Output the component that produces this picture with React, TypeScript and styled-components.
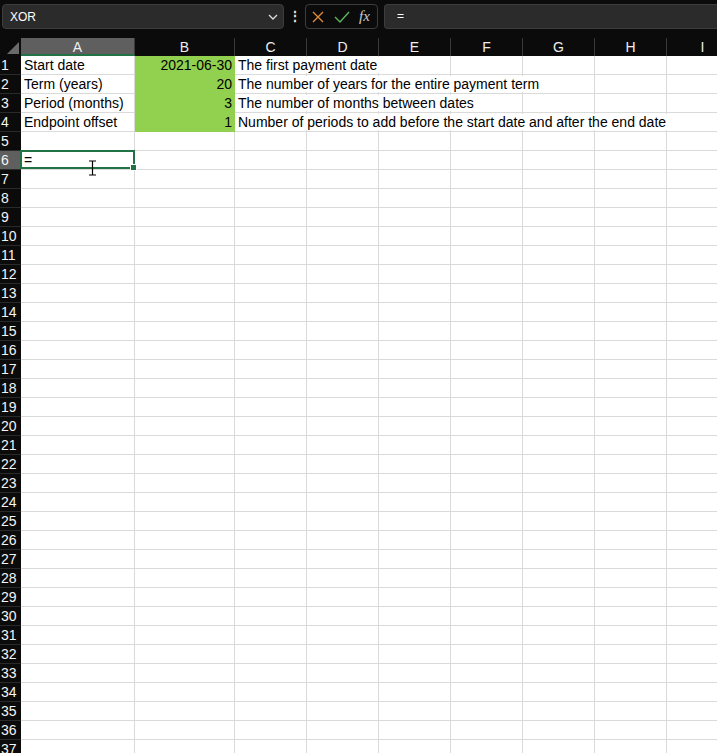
import React from "react";
import styled, { createGlobalStyle } from "styled-components";

const Global = createGlobalStyle`
  html, body { margin: 0; padding: 0; background: #fff; overflow: hidden; }
  body { font-family: Arial, "Liberation Sans", sans-serif; }
`;

const cols = [
  { n: "A", w: 114 },
  { n: "B", w: 100 },
  { n: "C", w: 72 },
  { n: "D", w: 72 },
  { n: "E", w: 72 },
  { n: "F", w: 72 },
  { n: "G", w: 72 },
  { n: "H", w: 72 },
  { n: "I", w: 72 },
];
const template = `21px ${cols.map((c) => c.w + "px").join(" ")}`;

const Page = styled.div`
  width: 717px;
  height: 753px;
  overflow: hidden;
  background: #fff;
`;
const Bar = styled.div`
  height: 38px;
  background: #0b0b0b;
  display: flex;
  align-items: flex-start;
  padding-top: 4px;
  box-sizing: border-box;
`;
const NameBox = styled.div`
  margin-left: 2px;
  width: 282px;
  height: 25px;
  box-sizing: border-box;
  background: #2b2b2b;
  border: 1px solid #3d3d3d;
  border-radius: 4px;
  display: flex;
  align-items: center;
  justify-content: space-between;
  padding: 0 4px 0 7px;
  color: #fff;
  font-size: 12px;
`;
const Dots = styled.div`
  width: 21px;
  text-align: center;
  color: #ddd;
  font-size: 14px;
  font-weight: bold;
  line-height: 25px;
`;
const FxBox = styled.div`
  width: 73px;
  height: 25px;
  box-sizing: border-box;
  border: 1px solid #3d3d3d;
  border-radius: 4px;
  display: flex;
  align-items: center;
  gap: 9px;
  padding-left: 5px;
`;
const Fx = styled.span`
  color: #ccc;
  font-family: "Liberation Serif", serif;
  font-style: italic;
  font-size: 15px;
`;
const Formula = styled.div`
  margin-left: 6px;
  flex: 1;
  height: 25px;
  box-sizing: border-box;
  background: #2b2b2b;
  border: 1px solid #3d3d3d;
  border-right: none;
  border-radius: 4px 0 0 4px;
  color: #fff;
  font-size: 12px;
  padding-left: 12px;
  line-height: 23px;
`;
const Grid = styled.div`
  display: grid;
  grid-template-columns: ${template};
  grid-auto-rows: 19px;
  grid-template-rows: 18px;
`;
const Corner = styled.div`
  background: #0b0b0b;
  position: relative;
  &::after {
    content: "";
    position: absolute;
    right: 2px;
    bottom: 2px;
    border-left: 12px solid transparent;
    border-bottom: 12px solid #6a6a6a;
  }
`;
const ColHead = styled.div<{ $sel?: boolean }>`
  background: ${(p) => (p.$sel ? "#5f5f5f" : "#0b0b0b")};
  color: #eee;
  font-size: 14px;
  text-align: center;
  line-height: 18px;
  box-sizing: border-box;
  border-right: 1px solid #3a3a3a;
  border-bottom: ${(p) => (p.$sel ? "2px solid #217346" : "none")};
`;
const RowHead = styled.div<{ $sel?: boolean }>`
  background: ${(p) => (p.$sel ? "#5f5f5f" : "#0b0b0b")};
  color: #f4f4f4;
  font-size: 14px;
  line-height: 19px;
  padding-left: 1px;
  box-sizing: border-box;
  border-bottom: 1px solid #2a2a2a;
  white-space: nowrap;
  overflow: hidden;
`;
const Cell = styled.div<{ $green?: boolean; $right?: boolean; $spill?: boolean }>`
  position: relative;
  box-sizing: border-box;
  background: ${(p) => (p.$green ? "#92d050" : "#fff")};
  border-right: 1px solid ${(p) => (p.$green ? "#92d050" : "#dadada")};
  border-bottom: 1px solid ${(p) => (p.$green ? "#92d050" : "#dadada")};
  font-size: 14px;
  color: #000;
  line-height: 19px;
  padding: 0 2px 0 3px;
  text-align: ${(p) => (p.$right ? "right" : "left")};
  white-space: nowrap;
  overflow: visible;
  z-index: ${(p) => (p.$spill ? 2 : 0)};
`;
const Spill = styled.span`
  background: #fff;
  padding-right: 2px;
`;
const Selected = styled.div`
  position: absolute;
  left: -1px;
  top: -1px;
  right: -1px;
  bottom: 0;
  border: 2px solid #217346;
  z-index: 3;
  &::after {
    content: "";
    position: absolute;
    right: -4px;
    bottom: -4px;
    width: 5px;
    height: 5px;
    background: #217346;
    border: 1px solid #fff;
  }
`;
const Cursor = styled.svg`
  position: absolute;
  left: 67px;
  top: 9px;
  z-index: 4;
`;

const data: Record<number, [string, string, string]> = {
  1: ["Start date", "2021-06-30", "The first payment date"],
  2: ["Term (years)", "20", "The number of years for the entire payment term"],
  3: ["Period (months)", "3", "The number of months between dates"],
  4: ["Endpoint offset", "1", "Number of periods to add before the start date and after the end date"],
};

export default function App() {
  const rows = Array.from({ length: 37 }, (_, i) => i + 1);
  return (
    <Page>
      <Global />
      <Bar>
        <NameBox>
          <span>XOR</span>
          <svg width="12" height="12" viewBox="0 0 12 12">
            <path d="M2 4l4 4 4-4" stroke="#ddd" strokeWidth="1.3" fill="none" />
          </svg>
        </NameBox>
        <Dots>⋮</Dots>
        <FxBox>
          <svg width="14" height="14" viewBox="0 0 14 14">
            <path d="M2 2l10 10M12 2L2 12" stroke="#e08a3a" strokeWidth="1.4" />
          </svg>
          <svg width="16" height="14" viewBox="0 0 16 14">
            <path d="M1 7l5 5L15 2" stroke="#5cb85c" strokeWidth="1.4" fill="none" />
          </svg>
          <Fx>fx</Fx>
        </FxBox>
        <Formula>=</Formula>
      </Bar>
      <Grid>
        <Corner />
        {cols.map((c) => (
          <ColHead key={c.n} $sel={c.n === "A"}>
            {c.n}
          </ColHead>
        ))}
        {rows.map((r) => {
          const d = data[r];
          return (
            <React.Fragment key={r}>
              <RowHead $sel={r === 6}>{r}</RowHead>
              {cols.map((c, ci) => {
                if (d && ci === 0) return <Cell key={ci}>{d[0]}</Cell>;
                if (d && ci === 1)
                  return (
                    <Cell key={ci} $green $right>
                      {d[1]}
                    </Cell>
                  );
                if (d && ci === 2)
                  return (
                    <Cell key={ci} $spill>
                      <Spill>{d[2]}</Spill>
                    </Cell>
                  );
                if (r === 6 && ci === 0)
                  return (
                    <Cell key={ci} $spill>
                      =
                      <Selected />
                      <Cursor width="9" height="16" viewBox="0 0 9 16">
                        <path d="M1 1h7M4.5 1v14M1 15h7" stroke="#000" strokeWidth="1.2" fill="none" />
                      </Cursor>
                    </Cell>
                  );
                return <Cell key={ci} />;
              })}
            </React.Fragment>
          );
        })}
      </Grid>
    </Page>
  );
}
